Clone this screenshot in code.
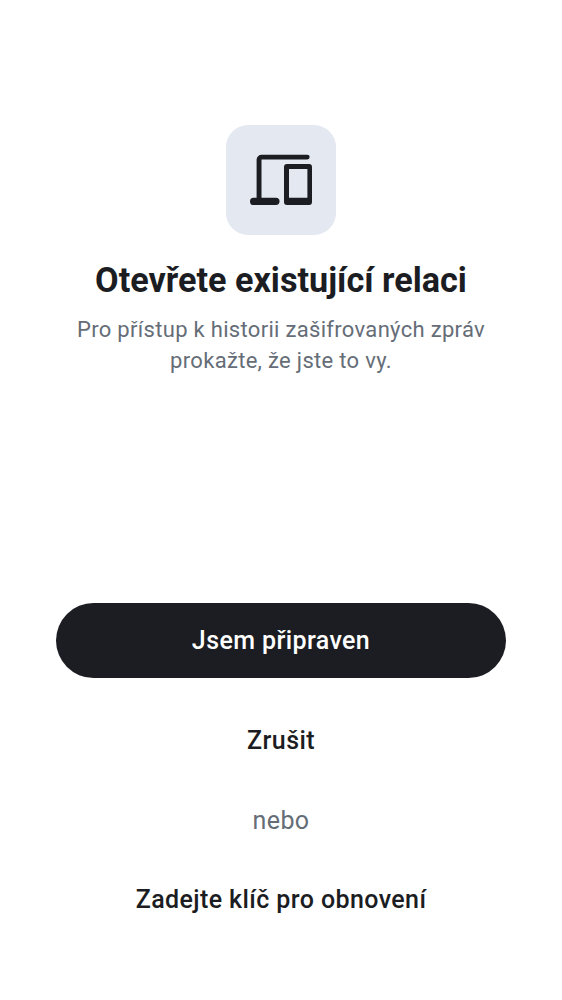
<main class="screen">
  <header>
    <div class="badge">
      <svg viewBox="0 0 64 64" width="64" height="64" aria-hidden="true">
        <path d="M4.600 57A3.600 3.600 0 0 1 1 53.400A3.700 3.700 0 0 1 4.600 49.700H7.600V11.600A5 5 0 0 1 12.600 6.700H58.300A2.350 2.350 0 0 1 58.300 11.400H12.500V49.700H26.900A3.650 3.650 0 0 1 26.900 57Z" />
        <path fill-rule="evenodd" d="M37.900 16H60.100A2.900 2.900 0 0 1 63 18.900V54.100A2.900 2.900 0 0 1 60.100 57H37.900A2.900 2.900 0 0 1 35 54.100V18.900A2.900 2.900 0 0 1 37.900 16ZM40 21V49.700H58.400V21Z" />
      </svg>
    </div>
    <h1>Otevřete existující relaci</h1>
    <p class="subtitle">Pro přístup k historii zašifrovaných zpráv prokažte, že jste to vy.</p>
  </header>
  <footer>
    <button class="primary">Jsem připraven</button>
    <button class="cancel">Zrušit</button>
    <p class="or">nebo</p>
    <button class="recovery">Zadejte klíč pro obnovení</button>
  </footer>
</main>

<style>
  :global(body) { margin: 0; background: #fff; }
  .screen {
    box-sizing: border-box;
    height: 1000px;
    padding: 125px 56px 63px;
    display: flex;
    flex-direction: column;
    justify-content: space-between;
    font-family: Roboto, sans-serif;
    color: #1b1d22;
    text-align: center;
  }
  header { display: flex; flex-direction: column; align-items: center; }
  .badge {
    width: 110px;
    height: 109.500px;
    border-radius: 22px;
    background: #e3e8f1;
    display: flex;
    align-items: center;
    justify-content: center;
  }
  svg { display: block; fill: #1b1d22; }
  h1 { margin: 24.500px 0 0; font-size: 34.200px; line-height: 42px; font-weight: 700; white-space: nowrap; }
  .subtitle { margin: 13px 0 0; width: 430px; font-size: 22px; line-height: 31.250px; letter-spacing: .31px; color: #656d77; }
  footer { display: flex; flex-direction: column; }
  button {
    appearance: none;
    border: 0;
    padding: 0;
    background: none;
    color: inherit;
    font: 500 25px/30px Roboto, sans-serif;
    letter-spacing: .4px;
  }
  .primary { height: 75px; border-radius: 38px; background: #1b1d22; color: #fff; }
  .cancel { height: 75px; margin-top: 25px; }
  .or { margin: 27px 0 0; font-size: 25px; line-height: 31px; letter-spacing: .4px; color: #656d77; }
  .recovery { height: 75px; margin-top: 26px; }
</style>
